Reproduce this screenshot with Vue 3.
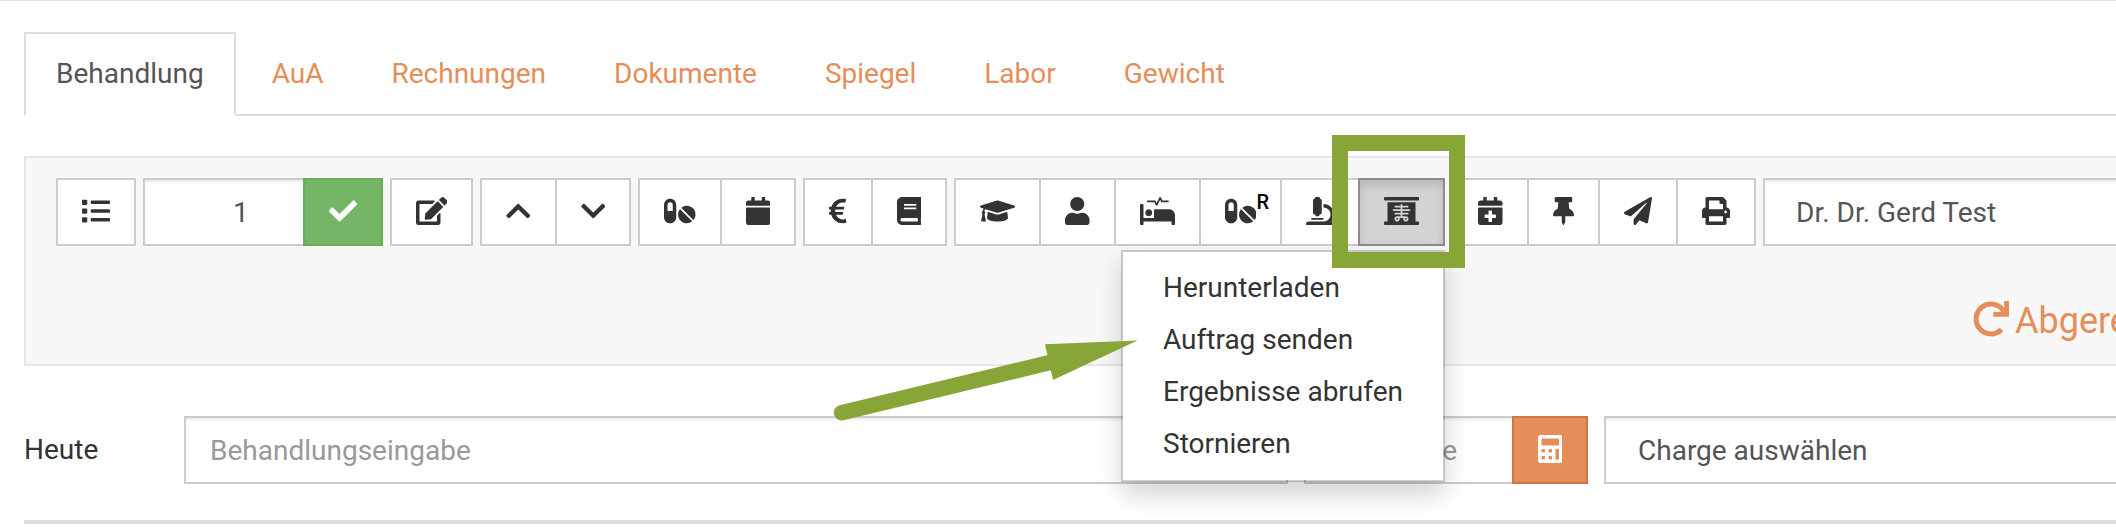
<script setup>
const icons = {
  list: { w: 512, d: 'M16 48h64c9 0 16 7 16 16v64c0 9-7 16-16 16H16c-9 0-16-7-16-16V64c0-9 7-16 16-16zm0 160h64c9 0 16 7 16 16v64c0 9-7 16-16 16H16c-9 0-16-7-16-16v-64c0-9 7-16 16-16zm0 160h64c9 0 16 7 16 16v64c0 9-7 16-16 16H16c-9 0-16-7-16-16v-64c0-9 7-16 16-16zM176 64h320c9 0 16 7 16 16v32c0 9-7 16-16 16H176c-9 0-16-7-16-16V80c0-9 7-16 16-16zm0 160h320c9 0 16 7 16 16v32c0 9-7 16-16 16H176c-9 0-16-7-16-16v-32c0-9 7-16 16-16zm0 160h320c9 0 16 7 16 16v32c0 9-7 16-16 16H176c-9 0-16-7-16-16v-32c0-9 7-16 16-16z' },
  check: { w: 512, d: 'M173.898 439.404l-166.4-166.4c-9.997-9.997-9.997-26.206 0-36.204l36.203-36.204c9.997-9.998 26.207-9.998 36.204 0L192 312.69 432.095 72.596c9.997-9.997 26.207-9.997 36.204 0l36.203 36.204c9.997 9.997 9.997 26.206 0 36.204l-294.4 294.401c-9.998 9.997-26.207 9.997-36.204-.001z' },
  edit: { w: 576, d: 'M402.6 83.2l90.2 90.2c3.8 3.8 3.8 10 0 13.8L274.4 405.6l-92.8 10.3c-12.4 1.4-22.9-9.1-21.5-21.5l10.3-92.8L388.8 83.2c3.8-3.8 10-3.8 13.8 0zm162-22.9l-48.8-48.8c-15.2-15.2-39.9-15.2-55.2 0l-35.4 35.4c-3.8 3.8-3.8 10 0 13.8l90.2 90.2c3.8 3.8 10 3.8 13.8 0l35.4-35.4c15.2-15.3 15.2-40 0-55.2zM384 346.2V448H64V128h229.8c3.2 0 6.2-1.3 8.5-3.5l40-40c7.6-7.6 2.2-20.5-8.5-20.5H48C21.5 64 0 85.5 0 112v352c0 26.5 21.5 48 48 48h352c26.5 0 48-21.5 48-48V306.2c0-10.7-12.9-16-20.5-8.5l-40 40c-2.2 2.3-3.5 5.3-3.5 8.5z' },
  up: { w: 448, d: 'M240.971 130.524l194.343 194.343c9.373 9.373 9.373 24.569 0 33.941l-22.667 22.667c-9.357 9.357-24.522 9.375-33.901.04L224 227.495 69.255 381.516c-9.379 9.335-24.544 9.317-33.901-.04l-22.667-22.667c-9.373-9.373-9.373-24.569 0-33.941L207.03 130.525c9.372-9.373 24.568-9.373 33.941-.001z' },
  down: { w: 448, d: 'M207.029 381.476L12.686 187.132c-9.373-9.373-9.373-24.569 0-33.941l22.667-22.667c9.357-9.357 24.522-9.375 33.901-.04L224 284.505l154.745-154.021c9.379-9.335 24.544-9.317 33.901.04l22.667 22.667c9.373 9.373 9.373 24.569 0 33.941L240.971 381.476c-9.373 9.372-24.569 9.372-33.942 0z' },
  pills: { w: 576, d: 'M112 32C50.1 32 0 82.1 0 144v224c0 61.9 50.1 112 112 112s112-50.1 112-112V144c0-61.9-50.1-112-112-112zm48 224H64V144c0-26.5 21.5-48 48-48s48 21.5 48 48v112zm139.7-29.7c-3.5-3.5-9.4-3.1-12.3.8-45.3 62.5-40.4 150.1 15.9 206.4 56.3 56.3 143.9 61.2 206.4 15.9 4-2.9 4.3-8.8.8-12.3L299.7 226.3zm229.8-19c-56.3-56.3-143.9-61.2-206.4-15.9-4 2.9-4.3 8.8-.8 12.3l210.8 210.8c3.5 3.5 9.4 3.1 12.3-.8 45.3-62.6 40.5-150.1-15.9-206.4z' },
  calendar: { w: 448, d: 'M12 192h424c6.6 0 12 5.4 12 12v260c0 26.5-21.5 48-48 48H48c-26.5 0-48-21.5-48-48V204c0-6.6 5.4-12 12-12zm436-44v-36c0-26.5-21.5-48-48-48h-48V12c0-6.6-5.4-12-12-12h-40c-6.6 0-12 5.4-12 12v52H160V12c0-6.6-5.4-12-12-12h-40c-6.6 0-12 5.4-12 12v52H48C21.5 64 0 85.5 0 112v36c0 6.6 5.4 12 12 12h424c6.6 0 12-5.4 12-12z' },
  euro: { w: 320, d: 'M310.706 413.765c-1.314-6.63-7.835-10.872-14.424-9.369-10.692 2.439-27.422 5.413-45.426 5.413-56.763 0-101.929-34.79-121.461-85.449h113.689a12 12 0 0 0 11.708-9.369l6.373-28.36c1.686-7.502-4.019-14.631-11.708-14.631H115.22c-1.21-14.328-1.414-28.287.137-42.245H261.95a12 12 0 0 0 11.723-9.434l6.512-29.755c1.638-7.484-4.061-14.566-11.723-14.566H130.184c20.633-44.991 62.69-75.03 117.619-75.03 14.486 0 28.564 2.25 37.851 4.145 6.216 1.268 12.347-2.498 14.002-8.623l11.991-44.368c1.822-6.741-2.465-13.616-9.326-14.917C290.217 34.912 270.71 32 249.635 32 152.451 32 74.03 92.252 45.075 176H12c-6.627 0-12 5.373-12 12v29.755c0 6.627 5.373 12 12 12h21.569c-1.009 13.607-1.181 29.287-.181 42.245H12c-6.627 0-12 5.373-12 12v28.36c0 6.627 5.373 12 12 12h30.114C67.139 414.692 145.264 480 249.635 480c26.301 0 48.562-4.544 61.101-7.788 6.167-1.595 10.027-7.708 8.788-13.957l-8.818-44.49z' },
  book: { w: 448, d: 'M448 360V24c0-13.3-10.7-24-24-24H96C43 0 0 43 0 96v320c0 53 43 96 96 96h328c13.3 0 24-10.7 24-24v-16c0-7.5-3.5-14.3-8.9-18.7-4.2-15.4-4.2-59.3 0-74.7 5.4-4.3 8.9-11.1 8.9-18.6zM128 134c0-3.3 2.7-6 6-6h212c3.3 0 6 2.7 6 6v20c0 3.3-2.7 6-6 6H134c-3.3 0-6-2.7-6-6v-20zm0 64c0-3.3 2.7-6 6-6h212c3.3 0 6 2.7 6 6v20c0 3.3-2.7 6-6 6H134c-3.3 0-6-2.7-6-6v-20zm253.4 250H96c-17.7 0-32-14.3-32-32 0-17.6 14.4-32 32-32h285.4c-1.9 17.1-1.9 46.9 0 64z' },
  cap: { w: 640, d: 'M622.34 153.2L343.4 67.5c-15.2-4.67-31.6-4.67-46.79 0L17.66 153.2c-23.54 7.23-23.54 38.36 0 45.59l48.63 14.94c-10.67 13.19-17.23 29.28-17.88 46.9C38.78 266.15 32 276.11 32 288c0 10.78 5.68 19.85 13.86 25.65L20.33 428.53C18.11 438.52 25.71 448 35.94 448h56.11c10.24 0 17.84-9.48 15.62-19.47L82.14 313.65C90.32 307.85 96 298.78 96 288c0-11.57-6.47-21.25-15.66-26.87.76-15.02 8.44-28.3 20.69-36.72L296.6 284.5c9.06 2.78 26.44 6.25 46.79 0l278.95-85.7c23.55-7.24 23.55-38.36 0-45.6zM352.79 315.09c-28.53 8.76-52.84 3.92-65.59 0l-145.02-44.55L128 384c0 35.35 85.96 64 192 64s192-28.65 192-64l-14.18-113.47-145.03 44.56z' },
  user: { w: 448, d: 'M224 256c70.7 0 128-57.3 128-128S294.7 0 224 0 96 57.3 96 128s57.3 128 128 128zm89.6 32h-16.7c-22.2 10.2-46.9 16-72.9 16s-50.6-5.8-72.9-16h-16.7C60.2 288 0 348.2 0 422.4V464c0 26.5 21.5 48 48 48h352c26.5 0 48-21.5 48-48v-41.6c0-74.2-60.2-134.4-134.4-134.4z' },
  bed: { w: 640, d: 'M528 224H272c-8.8 0-16 7.2-16 16v144H64V144c0-8.8-7.2-16-16-16H16c-8.8 0-16 7.2-16 16v352c0 8.8 7.2 16 16 16h32c8.8 0 16-7.2 16-16v-48h512v48c0 8.8 7.2 16 16 16h32c8.8 0 16-7.2 16-16V336c0-61.9-50.1-112-112-112zM136 96h126.1l27.6 55.2c5.9 11.8 22.7 11.8 28.6 0L368 51.8 390.1 96H512c8.8 0 16-7.2 16-16s-7.2-16-16-16H409.9L382.3 8.8C376.4-3 359.6-3 353.7 8.8L304 108.2l-19.9-39.8c-1.4-2.7-4.1-4.4-7.2-4.4H136c-4.4 0-8 3.6-8 8v16c0 4.4 3.6 8 8 8zm24 256c35.3 0 64-28.7 64-64s-28.7-64-64-64-64 28.7-64 64 28.7 64 64 64z' },
  microscope: { w: 512, d: 'M160 320h12v16c0 8.84 7.16 16 16 16h40c8.84 0 16-7.16 16-16v-16h12c17.67 0 32-14.33 32-32V64c0-17.67-14.33-32-32-32V16c0-8.84-7.16-16-16-16h-64c-8.84 0-16 7.16-16 16v16c-17.67 0-32 14.33-32 32v224c0 17.67 14.33 32 32 32zm304 128h-1.29C493.24 413.99 512 369.2 512 320c0-105.88-86.12-192-192-192v64c70.58 0 128 57.42 128 128s-57.42 128-128 128H48c-26.51 0-48 21.49-48 48 0 8.84 7.16 16 16 16h480c8.84 0 16-7.16 16-16 0-26.51-21.49-48-48-48zm-360-32h208c4.42 0 8-3.58 8-8v-16c0-4.42-3.58-8-8-8H104c-4.42 0-8 3.58-8 8v16c0 4.42 3.58 8 8 8z' },
  xray: { w: 640, d: 'M240 384c-8.8 0-16 7.2-16 16s7.2 16 16 16 16-7.2 16-16-7.2-16-16-16zm160 32c8.8 0 16-7.2 16-16s-7.2-16-16-16-16 7.2-16 16 7.2 16 16 16zM624 0H16C7.2 0 0 7.2 0 16v32c0 8.8 7.2 16 16 16h608c8.8 0 16-7.2 16-16V16c0-8.8-7.2-16-16-16zm0 448h-48V96H64v352H16c-8.8 0-16 7.2-16 16v32c0 8.8 7.2 16 16 16h608c8.8 0 16-7.2 16-16v-32c0-8.8-7.2-16-16-16zM480 248c0 4.4-3.6 8-8 8H336v32h104c4.4 0 8 3.6 8 8v16c0 4.4-3.6 8-8 8H336v32h64c26.5 0 48 21.5 48 48s-21.5 48-48 48-48-21.5-48-48v-16h-64v16c0 26.5-21.5 48-48 48s-48-21.5-48-48 21.5-48 48-48h64v-32H200c-4.4 0-8-3.6-8-8v-16c0-4.4 3.6-8 8-8h104v-32H168c-4.4 0-8-3.6-8-8v-16c0-4.4 3.6-8 8-8h136v-32H200c-4.4 0-8-3.6-8-8v-16c0-4.4 3.6-8 8-8h104v-24c0-4.4 3.6-8 8-8h16c4.4 0 8 3.6 8 8v24h104c4.4 0 8 3.6 8 8v16c0 4.4-3.6 8-8 8H336v32h136c4.4 0 8 3.6 8 8v16z' },
  calendarPlus: { w: 448, d: 'M12 192h424c6.6 0 12 5.4 12 12v260c0 26.5-21.5 48-48 48H48c-26.5 0-48-21.5-48-48V204c0-6.6 5.4-12 12-12zm316 140c0-6.6-5.4-12-12-12h-60v-60c0-6.6-5.4-12-12-12h-40c-6.6 0-12 5.4-12 12v60h-60c-6.6 0-12 5.4-12 12v40c0 6.6 5.4 12 12 12h60v60c0 6.6 5.4 12 12 12h40c6.6 0 12-5.4 12-12v-60h60c6.6 0 12-5.4 12-12v-40zM448 148v-36c0-26.5-21.5-48-48-48h-48V12c0-6.6-5.4-12-12-12h-40c-6.6 0-12 5.4-12 12v52H160V12c0-6.6-5.4-12-12-12h-40c-6.6 0-12 5.4-12 12v52H48C21.5 64 0 85.5 0 112v36c0 6.6 5.4 12 12 12h424c6.6 0 12-5.4 12-12z' },
  pin: { w: 384, d: 'M298.028 214.267L285.793 96H328c13.255 0 24-10.745 24-24V24c0-13.255-10.745-24-24-24H56C42.745 0 32 10.745 32 24v48c0 13.255 10.745 24 24 24h42.207L85.972 214.267C37.465 236.82 0 277.261 0 328c0 13.255 10.745 24 24 24h136v104.007c0 1.242.289 2.467.845 3.578l24 48c2.941 5.882 11.364 5.893 14.311 0l24-48a8.008 8.008 0 0 0 .845-3.578V352h136c13.255 0 24-10.745 24-24-.001-51.183-37.983-91.42-85.973-113.733z' },
  plane: { w: 512, d: 'M476 3.2L12.5 270.6c-18.1 10.4-15.8 35.6 2.2 43.2L121 358.4l287.3-253.2c5.5-4.9 13.3 2.6 8.6 8.3L176 407v80.5c0 23.6 28.5 32.9 42.5 15.8L282 426l124.6 52.2c14.2 6 30.4-2.9 33-18.2l72-432C515 7.8 493.3-6.8 476 3.2z' },
  print: { w: 512, d: 'M448 192V77.25c0-8.49-3.37-16.62-9.37-22.63L393.37 9.37c-6-6-14.14-9.37-22.63-9.37H96C78.33 0 64 14.33 64 32v160c-35.35 0-64 28.65-64 64v112c0 8.84 7.16 16 16 16h48v96c0 17.67 14.33 32 32 32h320c17.67 0 32-14.33 32-32v-96h48c8.84 0 16-7.16 16-16V256c0-35.35-28.65-64-64-64zm-64 256H128v-96h256v96zm0-224H128V64h192v48c0 8.84 7.16 16 16 16h48v96zm48 72c-13.25 0-24-10.75-24-24 0-13.26 10.75-24 24-24s24 10.74 24 24c0 13.25-10.75 24-24 24z' },
  calculator: { w: 448, d: 'M400 0H48C22.4 0 0 22.4 0 48v416c0 25.6 22.4 48 48 48h352c25.6 0 48-22.4 48-48V48c0-25.6-22.4-48-48-48zM77 64h294q13 0 13 13v102q0 13-13 13H77q-13 0-13-13V77q0-13 13-13zM77 256h38q13 0 13 13v38q0 13-13 13H77q-13 0-13-13v-38q0-13 13-13zM205 256h38q13 0 13 13v38q0 13-13 13h-38q-13 0-13-13v-38q0-13 13-13zM333 256h38q13 0 13 13v166q0 13-13 13h-38q-13 0-13-13V269q0-13 13-13zM77 384h38q13 0 13 13v38q0 13-13 13H77q-13 0-13-13v-38q0-13 13-13zM205 384h38q13 0 13 13v38q0 13-13 13h-38q-13 0-13-13v-38q0-13 13-13z' },
  redo: { w: 512, d: 'M500.33 0h-47.41a12 12 0 0 0-12 12.57l4 82.76A247.42 247.42 0 0 0 256 8C119.34 8 7.9 119.53 8 256.19 8.1 393.07 119.1 504 256 504a247.1 247.1 0 0 0 166.18-63.91 12 12 0 0 0 .48-17.43l-34-34a12 12 0 0 0-16.38-.55A176 176 0 1 1 402.1 157.8l-101.53-4.87a12 12 0 0 0-12.57 12v47.41a12 12 0 0 0 12 12h200.33a12 12 0 0 0 12-12V12a12 12 0 0 0-12-12z' },
}

const tabs = ['Behandlung', 'AuA', 'Rechnungen', 'Dokumente', 'Spiegel', 'Labor', 'Gewicht']

// Button widths include both borders; neighbours in a group share one.
const groups = [
  [{ icon: 'edit', width: 83 }],
  [{ icon: 'up', width: 77 }, { icon: 'down', width: 76 }],
  [{ icon: 'pills', width: 84 }, { icon: 'calendar', width: 76 }],
  [{ icon: 'euro', width: 70 }, { icon: 'book', width: 76 }],
  [
    { icon: 'cap', width: 87 },
    { icon: 'user', width: 77 },
    { icon: 'bed', width: 87 },
    { icon: 'pills', width: 83, mark: 'R' },
    { icon: 'microscope', width: 80 },
    { icon: 'xray', width: 87, active: true },
  ],
  [
    { icon: 'calendarPlus', width: 77 },
    { icon: 'pin', width: 73 },
    { icon: 'plane', width: 80 },
    { icon: 'print', width: 80 },
  ],
]

const menu = ['Herunterladen', 'Auftrag senden', 'Ergebnisse abrufen', 'Stornieren']
</script>

<template>
  <div class="page">
    <nav class="tabs">
      <a v-for="(tab, i) in tabs" :key="tab" class="tab" :class="{ current: i === 0 }">{{ tab }}</a>
    </nav>

    <section class="panel">
      <div class="toolbar">
        <button class="btn list-btn">
          <svg class="icon" :viewBox="`0 0 ${icons.list.w} 512`"><path :d="icons.list.d" /></svg>
        </button>
        <div class="number">
          <div class="field count">1</div>
          <button class="btn confirm">
            <svg class="icon" :viewBox="`0 0 ${icons.check.w} 512`"><path :d="icons.check.d" /></svg>
          </button>
        </div>
        <div v-for="(group, g) in groups" :key="g" class="group">
          <button
            v-for="b in group"
            :key="b.icon"
            class="btn"
            :class="{ active: b.active }"
            :style="{ width: b.width + 'px' }"
          >
            <svg class="icon" :viewBox="`0 0 ${icons[b.icon].w} 512`">
              <path :d="icons[b.icon].d" fill-rule="evenodd" />
            </svg>
            <span v-if="b.mark" class="mark">{{ b.mark }}</span>
          </button>
        </div>
        <div class="field doctor">Dr. Dr. Gerd Test</div>
      </div>
      <a class="billing">
        <svg class="redo" viewBox="0 0 512 512"><path :d="icons.redo.d" /></svg>
        <span>Abgerechnet</span>
      </a>
    </section>

    <section class="entry">
      <span class="today">Heute</span>
      <div class="field treatment">Behandlungseingabe</div>
      <div class="amount-group">
        <div class="field amount">Menge</div>
        <button class="btn calc">
          <svg class="icon" :viewBox="`0 0 ${icons.calculator.w} 512`">
            <path :d="icons.calculator.d" fill-rule="evenodd" />
          </svg>
        </button>
      </div>
      <div class="field charge">Charge auswählen</div>
    </section>
    <div class="rule"></div>

    <ul class="menu">
      <li v-for="item in menu" :key="item">{{ item }}</li>
    </ul>

    <div class="frame"></div>
    <svg class="arrow" viewBox="0 0 310 90">
      <path d="M13.5 77.7L222 27.5" />
      <polygon points="217,9.3 309.5,5.5 225,45" />
    </svg>
  </div>
</template>

<style>
body {
  background: #fff;
}
</style>

<style scoped>
.page {
  position: relative;
  box-sizing: border-box;
  width: 2116px;
  height: 528px;
  padding: 31px 0 0 24px;
  border-top: 1px solid #e5e5e5;
  overflow: hidden;
  font-family: Roboto, "Liberation Sans", sans-serif;
  font-size: 28px;
  color: #333;
}
.page * {
  box-sizing: border-box;
}
.tabs {
  display: flex;
  gap: 4px;
  height: 84px;
  border-bottom: 2px solid #ddd;
}
.tab {
  height: 84px;
  padding: 0 30px;
  border: 2px solid transparent;
  line-height: 80px;
  color: #e58e59;
}
.tab.current {
  border-color: #ddd;
  border-bottom-color: #fff;
  background: #fff;
  color: #555;
}
.panel {
  width: 2200px;
  height: 210px;
  margin-top: 40px;
  padding: 20px 30px 0;
  border: 2px solid #e7e7e7;
  background: #f8f8f8;
}
.toolbar {
  display: flex;
  gap: 7px;
}
.group,
.number,
.amount-group {
  display: flex;
}
.group .btn + .btn {
  margin-left: -2px;
}
.btn {
  display: flex;
  position: relative;
  flex: none;
  align-items: center;
  justify-content: center;
  height: 68px;
  margin: 0;
  padding: 0 0 3px;
  border: 2px solid #ccc;
  background: #fff;
  color: #333;
  font: inherit;
}
.btn.active {
  border-color: #8c8c8c;
  background: #d4d4d4;
  box-shadow: inset 0 6px 10px rgba(0, 0, 0, 0.125);
}
.icon {
  display: block;
  height: 28px;
  fill: currentColor;
}
.mark {
  position: absolute;
  top: 10px;
  right: 11px;
  font-size: 20px;
  font-weight: 500;
  line-height: 24px;
  color: #000;
}
.list-btn,
.confirm {
  width: 80px;
}
.confirm {
  border-color: #67ae56;
  background: #74b666;
  color: #fff;
}
.field {
  flex: none;
  height: 68px;
  border: 2px solid #ccc;
  background: #fff;
  box-shadow: inset 0 2px 2px rgba(0, 0, 0, 0.075);
  line-height: 65px;
  color: #555;
  white-space: nowrap;
}
.count {
  width: 160px;
  padding-left: 88px;
  border-right: 0;
}
.doctor {
  width: 500px;
  padding-left: 31px;
}
.billing {
  display: flex;
  align-items: center;
  gap: 6px;
  width: 300px;
  height: 42px;
  margin: 53px 0 0 1917px;
  font-size: 36px;
  line-height: 42px;
  color: #e58e59;
}
.billing span {
  padding-top: 2px;
}
.redo {
  flex: none;
  width: 36px;
  height: 36px;
  margin-top: -2px;
  fill: currentColor;
}
.entry {
  display: flex;
  gap: 16px;
  width: 2300px;
  margin-top: 50px;
}
.today {
  width: 144px;
  line-height: 67px;
}
.treatment {
  width: 1104px;
  padding-left: 24px;
  color: #999;
}
.amount {
  width: 208px;
  padding-right: 55px;
  border-right: 0;
  text-align: right;
  color: #999;
}
.calc {
  width: 76px;
  border-color: #cc7743;
  background: #e58e59;
  color: #fff;
}
.charge {
  width: 560px;
  padding-left: 32px;
}
.rule {
  width: 2092px;
  height: 4px;
  margin-top: 36px;
  background: #ddd;
}
.menu {
  position: absolute;
  top: 249px;
  left: 1121px;
  width: 324px;
  height: 232px;
  margin: 0;
  padding: 10px 0 0 40px;
  border: 2px solid rgba(0, 0, 0, 0.18);
  background: #fff;
  background-clip: padding-box;
  box-shadow: 0 12px 24px rgba(0, 0, 0, 0.175);
  list-style: none;
}
.menu li {
  height: 52px;
  line-height: 52px;
  white-space: nowrap;
}
.frame {
  position: absolute;
  top: 134px;
  left: 1332px;
  width: 133px;
  height: 133px;
  border: 16px solid #88a538;
}
.arrow {
  position: absolute;
  top: 334px;
  left: 828px;
  width: 310px;
  height: 90px;
  fill: #88a538;
}
.arrow path {
  stroke: #88a538;
  stroke-width: 15.5;
  stroke-linecap: round;
}
</style>
